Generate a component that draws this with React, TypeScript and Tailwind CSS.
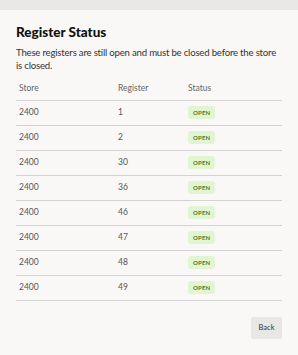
const rows = [
  { store: '2400', register: '1' },
  { store: '2400', register: '2' },
  { store: '2400', register: '30' },
  { store: '2400', register: '36' },
  { store: '2400', register: '46' },
  { store: '2400', register: '47' },
  { store: '2400', register: '48' },
  { store: '2400', register: '49' },
];

const StatusBadge = () => (
  <span className="inline-flex h-[13px] items-center rounded-[3px] bg-[#e2f5d2] px-[5px] text-[6px] font-bold tracking-[0.2px] text-[#4d7a26]">
    OPEN
  </span>
);

export default function App() {
  return (
    <div
      className="flex h-[355px] w-[298px] flex-col bg-[#f9f8f6]"
      style={{ fontFamily: 'Lato, "Open Sans", sans-serif' }}
    >
      <div className="h-[10px] bg-[#e9e8e6]" />
      <div className="flex flex-1 flex-col px-4 pt-[14px]">
        <h1 className="text-[13.5px] font-black leading-[16px] text-[#111]">Register Status</h1>
        <p className="mt-[6px] text-[9.6px] leading-[13px] tracking-[-0.2px] text-[#333]">
          These registers are still open and must be closed before the store is closed.
        </p>
        <table className="mt-[5px] w-full border-collapse text-[8.5px] text-[#555]">
          <thead>
            <tr className="h-[23px] border-b border-[#d4d3d1]">
              <th className="w-[99px] pl-[3px] text-left font-normal text-[#666]">Store</th>
              <th className="w-[70px] pl-[3px] text-left font-normal text-[#666]">Register</th>
              <th className="pl-[3px] text-left font-normal text-[#666]">Status</th>
            </tr>
          </thead>
          <tbody>
            {rows.map((row) => (
              <tr key={row.register} className="h-[25px] border-b border-[#d4d3d1]">
                <td className="pl-[3px]">{row.store}</td>
                <td className="pl-[3px]">{row.register}</td>
                <td className="pl-[3px]">
                  <StatusBadge />
                </td>
              </tr>
            ))}
          </tbody>
        </table>
        <div className="mt-[16px] flex justify-end">
          <button className="h-[22px] w-[31px] rounded-[2px] bg-[#e8e7e5] text-[7.5px] text-[#333]">
            Back
          </button>
        </div>
      </div>
    </div>
  );
}
